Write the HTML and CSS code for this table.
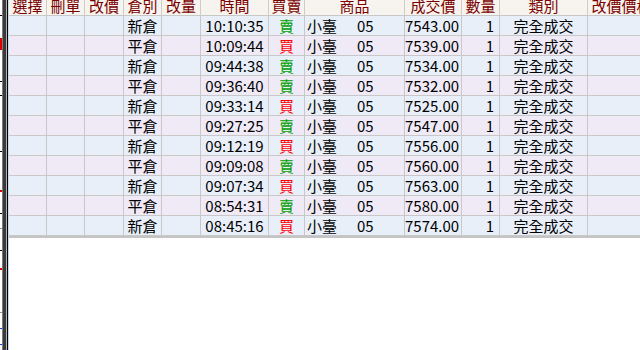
FILE: index.html
```html
<!DOCTYPE html>
<html>
<head>
<meta charset="utf-8">
<link rel="stylesheet" href="styles.css">
</head>
<body>
<div class="app">
  <div class="strip">
    <i class="mk k" style="top:15px"></i>
    <i class="mk r" style="top:38px;height:12px"></i>
    <i class="mk k" style="top:81px"></i>
    <i class="mk k" style="top:95px"></i>
    <i class="mk k" style="top:151px"></i>
    <i class="mk r" style="top:190px;height:2px"></i>
    <i class="mk k" style="top:213px"></i>
    <i class="mk g" style="top:228px"></i>
    <i class="mk k" style="top:250px"></i>
    <i class="mk r" style="top:268px;height:2px"></i>
    <i class="mk g" style="top:312px"></i>
    <i class="mk b" style="top:328px"></i>
    <i class="mk b" style="top:344px"></i>
  </div>
  <div class="pane">
    <div class="grid head">
      <div class="hc">選擇</div><div class="hc">刪單</div><div class="hc">改價</div><div class="hc">倉別</div><div class="hc">改量</div><div class="hc">時間</div><div class="hc">買賣</div><div class="hc">商品</div><div class="hc">成交價</div><div class="hc">數量</div><div class="hc">類別</div><div class="hc">改價價格</div>
    </div>

    <div class="grid row odd"><div class="c"></div><div class="c"></div><div class="c"></div><div class="c ctr">新倉</div><div class="c"></div><div class="c ctr">10:10:35</div><div class="c ctr sell">賣</div><div class="c prod"><span class="pn">小臺</span>05</div><div class="c num">7543.00</div><div class="c num">1</div><div class="c ctr">完全成交</div><div class="c"></div></div>
    <div class="grid row even"><div class="c"></div><div class="c"></div><div class="c"></div><div class="c ctr">平倉</div><div class="c"></div><div class="c ctr">10:09:44</div><div class="c ctr buy">買</div><div class="c prod"><span class="pn">小臺</span>05</div><div class="c num">7539.00</div><div class="c num">1</div><div class="c ctr">完全成交</div><div class="c"></div></div>
    <div class="grid row odd"><div class="c"></div><div class="c"></div><div class="c"></div><div class="c ctr">新倉</div><div class="c"></div><div class="c ctr">09:44:38</div><div class="c ctr sell">賣</div><div class="c prod"><span class="pn">小臺</span>05</div><div class="c num">7534.00</div><div class="c num">1</div><div class="c ctr">完全成交</div><div class="c"></div></div>
    <div class="grid row even"><div class="c"></div><div class="c"></div><div class="c"></div><div class="c ctr">平倉</div><div class="c"></div><div class="c ctr">09:36:40</div><div class="c ctr sell">賣</div><div class="c prod"><span class="pn">小臺</span>05</div><div class="c num">7532.00</div><div class="c num">1</div><div class="c ctr">完全成交</div><div class="c"></div></div>
    <div class="grid row odd"><div class="c"></div><div class="c"></div><div class="c"></div><div class="c ctr">新倉</div><div class="c"></div><div class="c ctr">09:33:14</div><div class="c ctr buy">買</div><div class="c prod"><span class="pn">小臺</span>05</div><div class="c num">7525.00</div><div class="c num">1</div><div class="c ctr">完全成交</div><div class="c"></div></div>
    <div class="grid row even"><div class="c"></div><div class="c"></div><div class="c"></div><div class="c ctr">平倉</div><div class="c"></div><div class="c ctr">09:27:25</div><div class="c ctr sell">賣</div><div class="c prod"><span class="pn">小臺</span>05</div><div class="c num">7547.00</div><div class="c num">1</div><div class="c ctr">完全成交</div><div class="c"></div></div>
    <div class="grid row odd"><div class="c"></div><div class="c"></div><div class="c"></div><div class="c ctr">新倉</div><div class="c"></div><div class="c ctr">09:12:19</div><div class="c ctr buy">買</div><div class="c prod"><span class="pn">小臺</span>05</div><div class="c num">7556.00</div><div class="c num">1</div><div class="c ctr">完全成交</div><div class="c"></div></div>
    <div class="grid row even"><div class="c"></div><div class="c"></div><div class="c"></div><div class="c ctr">平倉</div><div class="c"></div><div class="c ctr">09:09:08</div><div class="c ctr sell">賣</div><div class="c prod"><span class="pn">小臺</span>05</div><div class="c num">7560.00</div><div class="c num">1</div><div class="c ctr">完全成交</div><div class="c"></div></div>
    <div class="grid row odd"><div class="c"></div><div class="c"></div><div class="c"></div><div class="c ctr">新倉</div><div class="c"></div><div class="c ctr">09:07:34</div><div class="c ctr buy">買</div><div class="c prod"><span class="pn">小臺</span>05</div><div class="c num">7563.00</div><div class="c num">1</div><div class="c ctr">完全成交</div><div class="c"></div></div>
    <div class="grid row even"><div class="c"></div><div class="c"></div><div class="c"></div><div class="c ctr">平倉</div><div class="c"></div><div class="c ctr">08:54:31</div><div class="c ctr sell">賣</div><div class="c prod"><span class="pn">小臺</span>05</div><div class="c num">7580.00</div><div class="c num">1</div><div class="c ctr">完全成交</div><div class="c"></div></div>
    <div class="grid row odd"><div class="c"></div><div class="c"></div><div class="c"></div><div class="c ctr">新倉</div><div class="c"></div><div class="c ctr">08:45:16</div><div class="c ctr buy">買</div><div class="c prod"><span class="pn">小臺</span>05</div><div class="c num">7574.00</div><div class="c num">1</div><div class="c ctr">完全成交</div><div class="c"></div></div>
    <div class="end"></div>
  </div>
</div>
</body>
</html>
```

FILE: styles.css
```css
html, body {
  margin: 0;
  padding: 0;
  background: #ffffff;
}
body {
  width: 640px;
  height: 350px;
  overflow: hidden;
  font-family: "Liberation Sans Narrow", "Noto Sans CJK TC", sans-serif;
  font-size: 15px;
  color: #000;
}
.app {
  display: flex;
  width: 640px;
  height: 350px;
}
.strip {
  position: relative;
  flex: 0 0 9px;
  height: 350px;
  background: linear-gradient(to right,
    #ffffff 0 2px,
    #7c7c7c 2px 3px,
    #3a3a3a 3px 6px,
    #b4b4b4 6px 7px,
    #000000 7px 8px,
    #c6d8ee 8px 9px);
}
.mk {
  position: absolute;
  left: 0;
  width: 2px;
  height: 1px;
}
.mk.k { background: #000; }
.mk.r { background: #e00000; }
.mk.g { background: #909090; }
.mk.b { background: #2040e0; }
.pane {
  flex: 1 1 auto;
  min-width: 0;
  overflow: hidden;
}
.grid {
  display: grid;
  grid-template-columns: 38px 38px 39px 38px 39px 68px 36px 100px 57px 38px 88px 68px;
  width: 647px;
}
.head {
  background: #f7f3ef;
}
.hc {
  box-sizing: border-box;
  height: 16px;
  line-height: 11px;
  overflow: hidden;
  text-align: center;
  white-space: nowrap;
  color: #7a0000;
  font-family: "Noto Sans CJK TC", sans-serif;
  border-right: 1px solid #d0ccc8;
  border-bottom: 1px solid #c8c8c8;
}
.row.odd { background: #e8eff9; }
.row.even { background: #f0eaf7; }
.c {
  box-sizing: border-box;
  height: 20px;
  line-height: 19px;
  white-space: nowrap;
  overflow: hidden;
  border-right: 1px solid #c8c8c8;
  border-bottom: 1px solid #c8c8c8;
}
.ctr { text-align: center; }
.num { text-align: right; padding-right: 5px; }
.prod { padding-left: 2px; }
.pn { display: inline-block; width: 50px; }
.sell { color: #00a000; }
.buy { color: #ff0000; }
.end {
  height: 2px;
  width: 647px;
  background: #c4c4c4;
}
```
